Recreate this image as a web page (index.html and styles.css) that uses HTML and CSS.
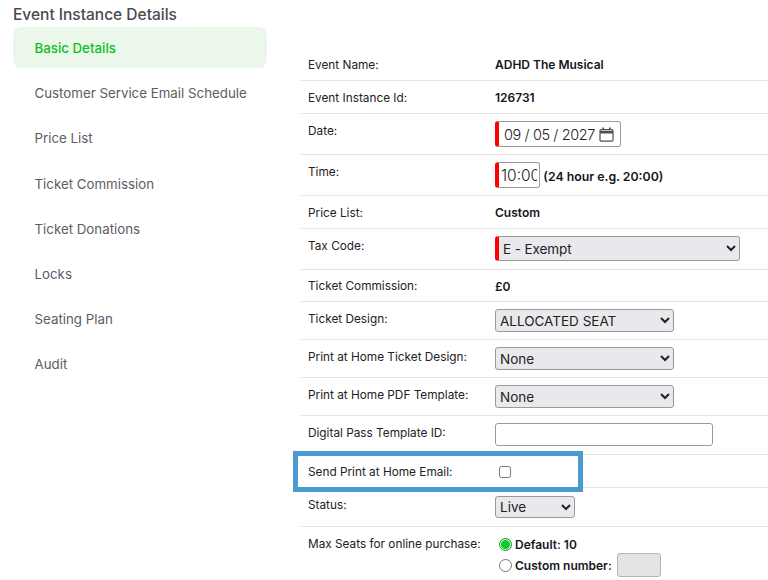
FILE: index.html
```html
<!DOCTYPE html>
<html lang="en">
<head>
    <meta charset="UTF-8">
    <meta name="viewport" content="width=device-width, initial-scale=1.0">
    <title>Event Instance Details</title>
    <link rel="stylesheet" href="styles.css">
</head>
<body>
    <div class="page">
        <!-- side menu -->
        <div class="sidebar">
            <h3>Event Instance Details</h3>
            <a class="active" href="#">Basic Details</a>
            <a href="#">Customer Service Email Schedule</a>
            <a href="#">Price List</a>
            <a href="#">Ticket Commission</a>
            <a href="#">Ticket Donations</a>
            <a href="#">Locks</a>
            <a href="#">Seating Plan</a>
            <a href="#">Audit</a>
        </div>

        <!-- details form -->
        <div class="details">
            <table>
                <tr class="short"><td>Event Name:</td><td><b>ADHD The Musical</b></td></tr>
                <tr class="short"><td>Event Instance Id:</td><td><b>126731</b></td></tr>
                <tr class="tall">
                    <td>Date:</td>
                    <td>
                        <div class="required date">
                            <input type="text" value="09 / 05 / 2027">
                            <svg width="15" height="15" viewBox="0 0 15 15" fill="none" stroke="#4f4f4f" stroke-width="1.2">
                                <rect x="1" y="2.6" width="13" height="11.6" rx="1.2"/>
                                <path d="M1 5.2h13" stroke-width="2.6"/>
                                <path d="M4.2 0.6v2.4M10.8 0.6v2.4" stroke-width="1.6"/>
                            </svg>
                        </div>
                    </td>
                </tr>
                <tr class="tall">
                    <td>Time:</td>
                    <td class="inline"><input class="required time" type="text" value="10:00"> <b>(24 hour e.g. 20:00)</b></td>
                </tr>
                <tr class="short"><td>Price List:</td><td><b>Custom</b></td></tr>
                <tr class="tall">
                    <td>Tax Code:</td>
                    <td><select class="required tax"><option>E - Exempt</option></select></td>
                </tr>
                <tr class="short commission"><td>Ticket Commission:</td><td><b>£0</b></td></tr>
                <tr class="mid">
                    <td>Ticket Design:</td>
                    <td><select class="wide"><option>ALLOCATED SEAT</option></select></td>
                </tr>
                <tr class="mid">
                    <td>Print at Home Ticket Design:</td>
                    <td><select class="wide"><option>None</option></select></td>
                </tr>
                <tr class="mid">
                    <td>Print at Home PDF Template:</td>
                    <td><select class="wide"><option>None</option></select></td>
                </tr>
                <tr class="mid pass-row">
                    <td>Digital Pass Template ID:</td>
                    <td><input class="pass" type="text"></td>
                </tr>
                <tr class="short">
                    <td>Send Print at Home Email:</td>
                    <td><input class="check" type="checkbox"></td>
                </tr>
                <tr class="mid pass-row">
                    <td>Status:</td>
                    <td><select class="status"><option>Live</option></select></td>
                </tr>
                <tr class="seats">
                    <td>Max Seats for online purchase:</td>
                    <td>
                        <label class="seat-option"><input type="radio" name="seats" checked> <b>Default: 10</b></label>
                        <label class="seat-option"><input type="radio" name="seats"> <b>Custom number:</b> <input class="custom" type="text" disabled></label>
                    </td>
                </tr>
            </table>
            <div class="highlight"></div>
        </div>
    </div>
</body>
</html>
```

FILE: styles.css
```css
html, body {
    height: 580px;
    overflow: hidden;
}

body {
    font-family: "Inter", "Liberation Sans", sans-serif;
    color: #222;
    background: #fff;
    margin: 0;
    padding: 0;
}

.page {
    display: flex;
}

.sidebar {
    width: 254px;
    margin-left: 13px;
    flex-shrink: 0;
}

.sidebar h3 {
    margin: 0 0 3px;
    padding-top: 5px;
    height: 19px;
    font-size: 15.5px;
    line-height: 19px;
    font-weight: 500;
    color: #4a4a4f;
}

.sidebar a {
    display: block;
    height: 41px;
    line-height: 43px;
    margin-bottom: 4.2px;
    padding-left: 21.5px;
    border-radius: 8px;
    font-size: 13.3px;
    color: #5c5c66;
    text-decoration: none;
}

.sidebar a.active {
    background: #ebf7ea;
    color: #0cc11f;
    font-weight: 500;
}

.details {
    position: relative;
    flex: 1;
    margin-left: 34px;
    padding-top: 48px;
}

table {
    width: 100%;
    border-collapse: collapse;
    font-size: 11.8px;
}

td {
    padding: 8px 7px 0;
    border-bottom: 1px solid #e4e4e4;
    vertical-align: top;
    line-height: 17px;
    white-space: nowrap;
}

td:first-child {
    width: 173px;
    line-height: 19px;
}

td b {
    font-size: 12px;
    font-weight: 600;
    color: #16161a;
}

tr.short td {
    height: 24px;
}

tr.commission td {
    height: 23px;
}

tr.commission td:first-child {
    line-height: 17px;
}

tr.tall td {
    height: 32px;
}

tr.mid td {
    height: 29px;
}

tr.pass-row td {
    height: 30px;
}

tr.seats td {
    height: 50px;
}

input, select {
    font-family: inherit;
    font-size: 13.5px;
    color: #222;
    box-sizing: border-box;
    margin: 0;
    border: 1px solid #999;
    border-radius: 3px;
}

select {
    background-color: #e9e9ed;
}

.required {
    border-left: 4px solid #f00;
}

.date {
    display: flex;
    align-items: center;
    box-sizing: border-box;
    width: 126px;
    height: 26px;
    margin-top: -1px;
    border-top: 1px solid #999;
    border-right: 1px solid #999;
    border-bottom: 1px solid #999;
    border-radius: 3px;
}

.date input {
    width: 100px;
    height: 22px;
    padding: 0 0 0 5px;
    border: none;
    font-size: 14.5px;
    font-weight: 300;
    letter-spacing: -0.4px;
    outline: none;
}

.time {
    width: 45px;
    height: 26px;
    margin-top: -1px;
    padding: 0 2px;
    font-size: 15.5px;
    font-weight: 300;
}

.inline b {
    font-size: 12.3px;
}

.tax {
    display: block;
    width: 245px;
    height: 25px;
    margin-top: -1px;
    padding-left: 0;
    letter-spacing: -0.1px;
}

.wide {
    display: block;
    width: 179px;
    height: 23px;
    margin-top: -1px;
}

.pass {
    display: block;
    width: 218px;
    height: 23px;
    margin-top: -1px;
}

.check {
    display: block;
    width: 12px;
    height: 12px;
    margin: 3px 0 0 4px;
}

.status {
    display: block;
    width: 80px;
    height: 22px;
}

.seat-option {
    display: flex;
    align-items: center;
    gap: 3px;
    height: 21px;
    padding-left: 4px;
    margin-top: -1px;
}

.seat-option + .seat-option {
    margin-top: 0;
}

.seat-option input[type="radio"] {
    appearance: none;
    flex-shrink: 0;
    width: 13px;
    height: 13px;
    border: 1px solid #777;
    border-radius: 50%;
    background: #fff;
}

.seat-option input[type="radio"]:checked {
    border-color: #0a9c1c;
    background: radial-gradient(circle, #12c92a 0 4px, #d8f5db 5px);
}

.custom {
    width: 44px;
    height: 24px;
    margin: -1px 0 0 2px;
    background: #e4e4e4;
    border-color: #b5b5b5;
}

.highlight {
    position: absolute;
    left: -8px;
    top: 451px;
    width: 290px;
    height: 41px;
    box-sizing: border-box;
    border: 5px solid #4a9bd0;
}
```
